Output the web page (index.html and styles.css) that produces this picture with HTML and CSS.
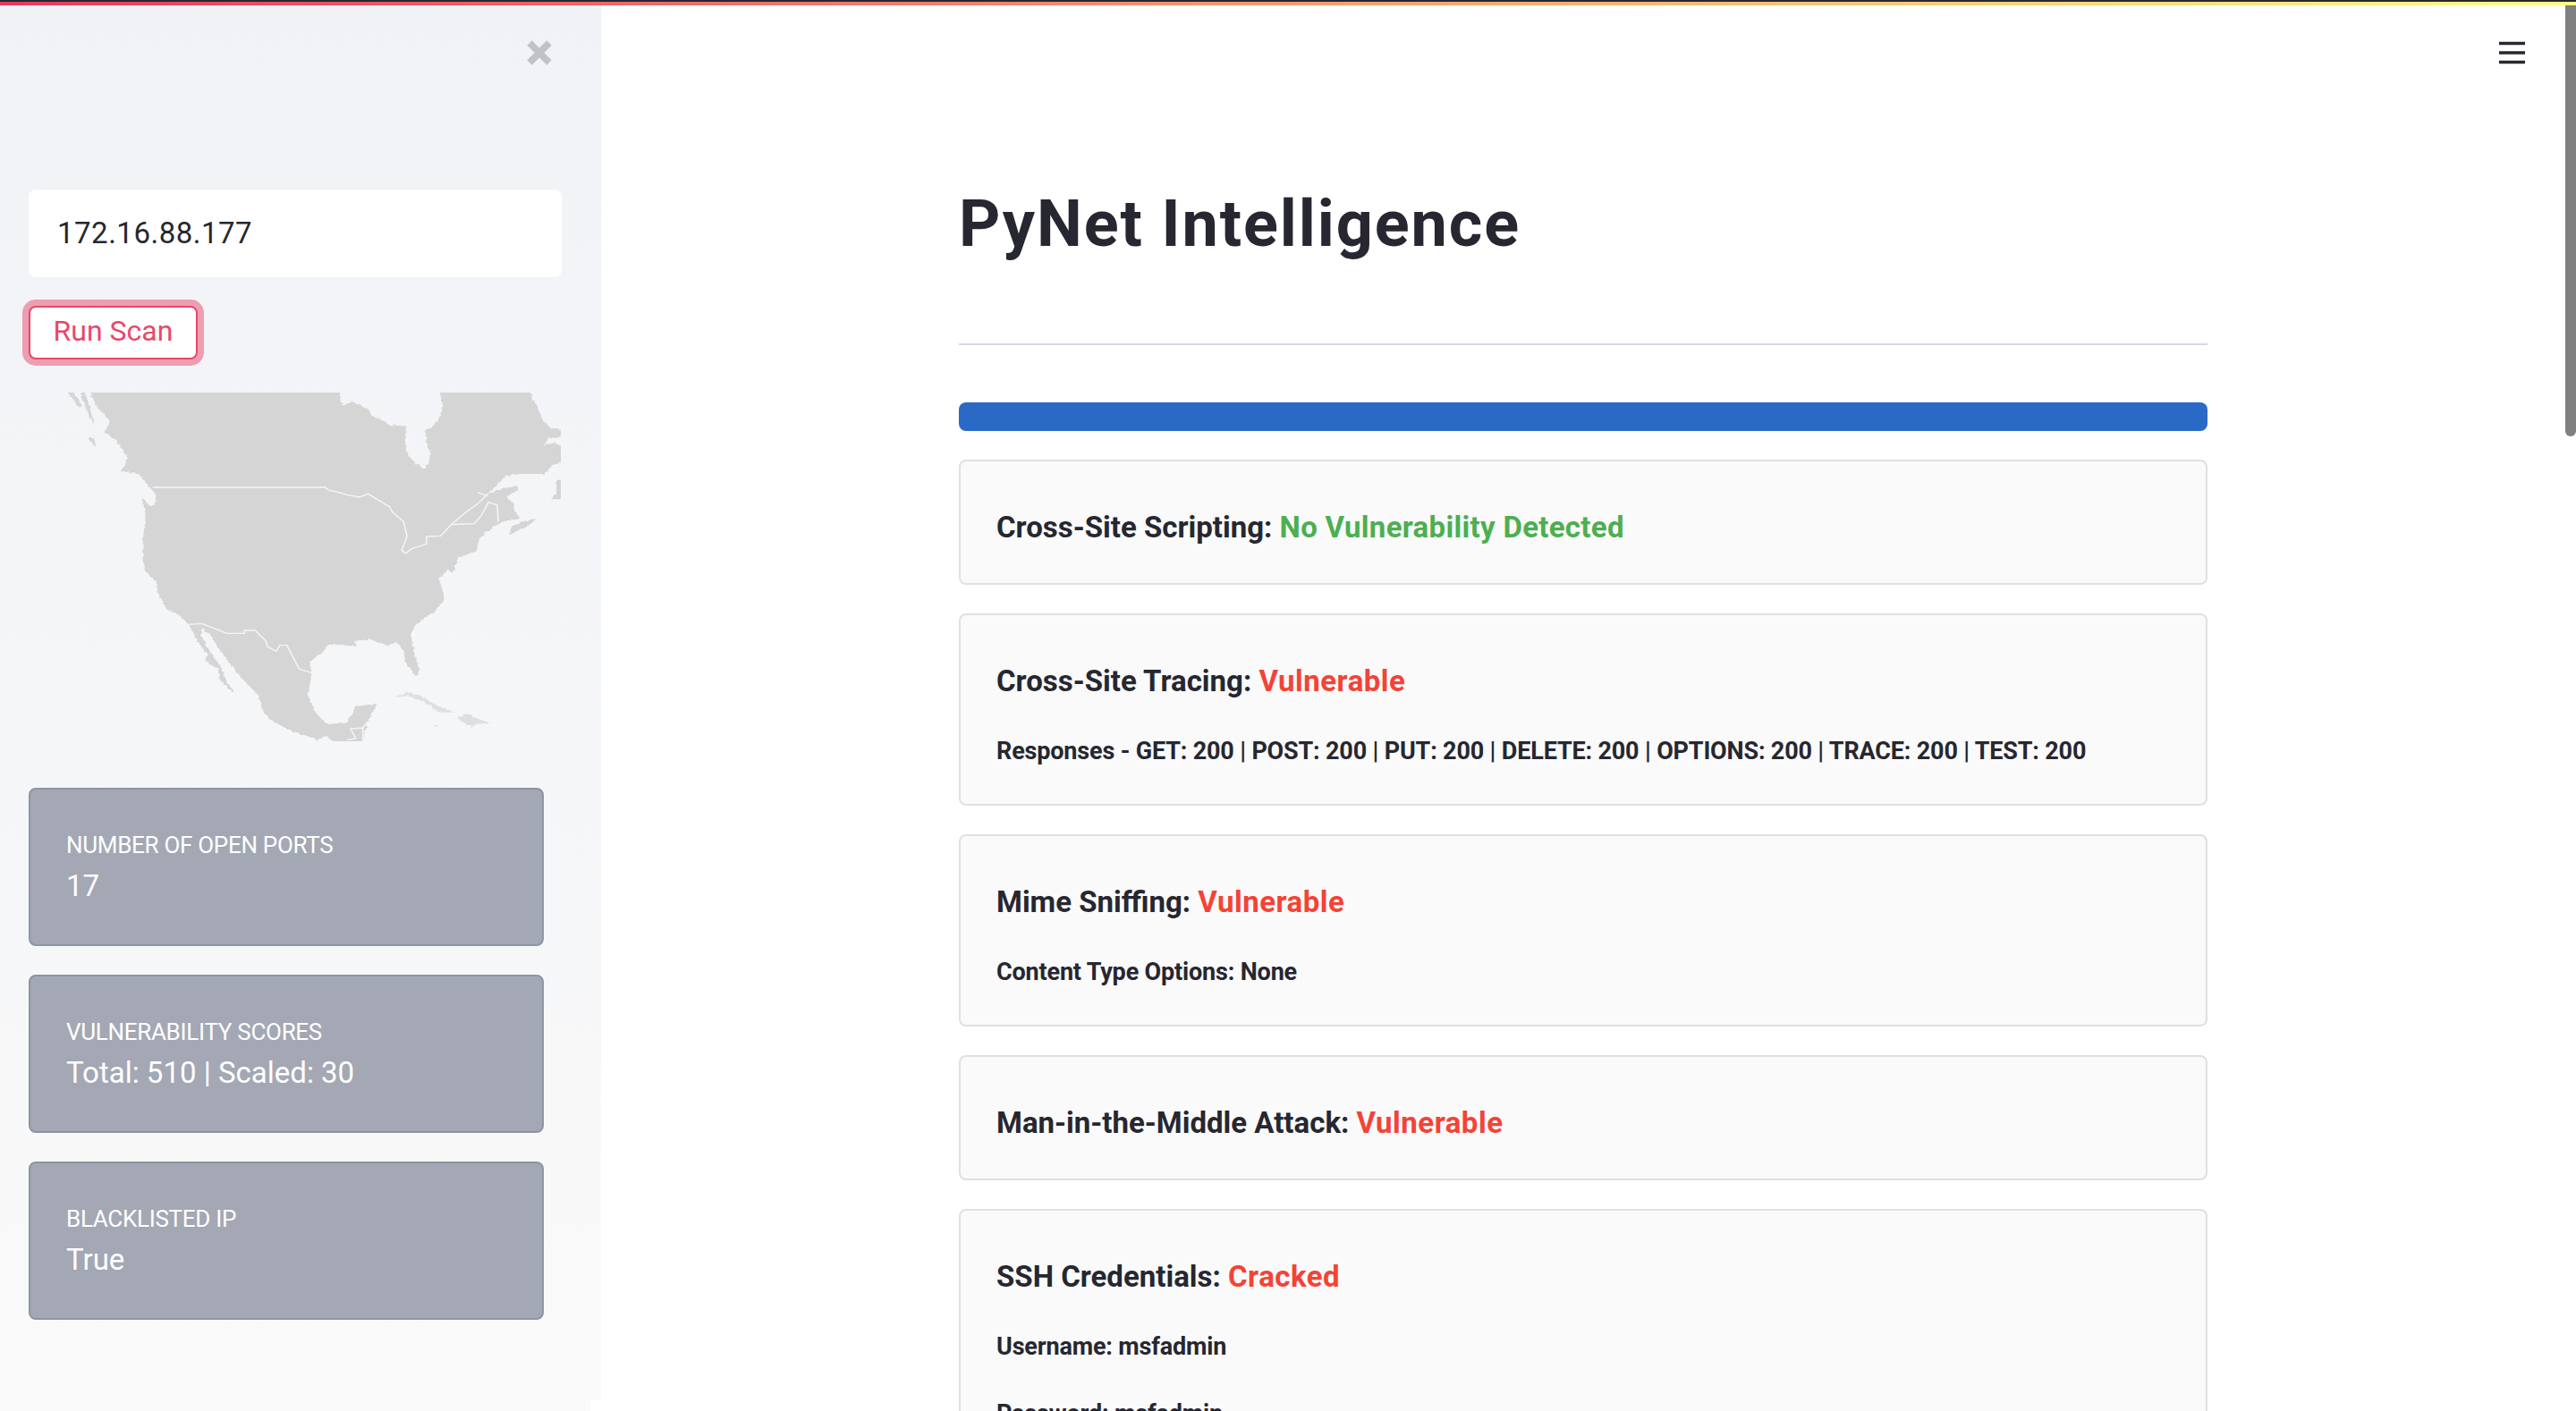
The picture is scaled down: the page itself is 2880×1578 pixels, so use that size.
FILE: index.html
```html
<!DOCTYPE html>
<html lang="en">
<head>
<meta charset="utf-8">
<title>PyNet Intelligence</title>
<link rel="stylesheet" href="styles.css">
</head>
<body>
<div class="topbar"></div>
<div class="app">
  <aside class="sidebar">
    <div class="close-row">
      <svg class="close-icon" viewBox="0 0 28 28" aria-hidden="true"><path d="M3 3L25 25M25 3L3 25"/></svg>
    </div>
    <div class="ip-input">172.16.88.177</div>
    <button class="run-btn" type="button">Run Scan</button>
    <svg class="map" viewBox="88 57 1397 1170" preserveAspectRatio="none" aria-hidden="true">
      <defs>
        <filter id="rough" x="-2%" y="-2%" width="104%" height="104%">
          <feTurbulence type="fractalNoise" baseFrequency="0.09" numOctaves="2" seed="4"/>
          <feDisplacementMap in="SourceGraphic" scale="11" xChannelSelector="R" yChannelSelector="G"/>
        </filter>
      </defs>
      <g filter="url(#rough)">
        <path class="land" d="M140 30L860 30L860 57L865 100L895 88L920 100L940 115L950 135L990 155L995 165L1045 170L1047 200L1045 235L1055 270L1075 295L1085 300L1100 315L1112 290L1115 265L1105 225L1100 185L1125 170L1145 135L1152 100L1143 57L1143 30L1400 30L1400 60L1415 100L1435 150L1455 175L1500 185L1500 198L1450 212L1435 235L1470 225L1500 250L1500 290L1460 300L1440 330L1375 330L1330 335L1310 360L1280 395L1320 378L1360 372L1365 385L1330 405L1350 430L1355 460L1370 480L1320 490L1280 520L1255 545L1245 590L1195 610L1180 660L1165 650L1140 680L1150 720L1155 750L1130 790L1075 835L1060 870L1075 950L1085 990L1075 1010L1045 960L1040 925L1020 895L995 905L945 885L900 890L905 910L875 905L845 900L820 910L810 930L775 960L780 1000L770 1070L790 1130L825 1170L880 1165L905 1110L965 1100L940 1160L925 1220L930 1240L850 1240L825 1210L795 1222L720 1190L670 1160L640 1125L630 1075L570 1000L520 920L490 865L470 850L468 870L490 920L520 970L545 1040L563 1060L555 1062L520 1020L515 985L480 960L485 935L460 900L430 830L395 795L370 785L345 730L340 690L310 660L303 625L302 560L310 470L300 405L320 435L335 435L340 400L315 365L290 330L240 320L260 275L225 215L195 190L210 150L175 110Z"/>
        <path class="land" d="M1340 535L1345 510L1375 490L1415 482L1385 510L1355 525Z"/>
        <path class="land" d="M1457 415L1470 395L1475 350L1500 348L1500 415Z"/>
        <path class="land faint" d="M1012 1080L1050 1062L1090 1075L1130 1105L1185 1130L1140 1130L1100 1095L1050 1075Z"/>
        <path class="land faint" d="M1190 1150L1215 1135L1270 1160L1290 1165L1240 1170L1235 1180L1210 1165Z"/>
        <path class="land faint" d="M1125 1172L1145 1175L1130 1178Z"/>
        <path class="land" d="M150 205L165 215L170 240L155 225Z"/>
        <path class="land" d="M90 57L105 57L130 100L125 110Z"/>
        <path class="land" d="M125 57L140 57L155 120L165 165L148 130Z"/>
        <path class="water" d="M1375 350L1405 368L1385 362Z"/>
      </g>
      <path class="border" d="M330 375L820 375L822 380L830 385L850 390L880 400L915 408L940 397L1000 440L1010 460L1040 490L1050 540L1035 585L1045 597L1065 580L1105 565L1105 540L1145 538L1175 500L1240 497L1260 470L1280 425L1305 435L1308 490"/>
      <path class="border" d="M1175 500L1215 460L1250 430L1280 395"/>
      <path class="border" d="M1250 392L1278 405"/>
      <path class="border" d="M430 835L470 832L540 865L590 865L590 855L620 855L650 890L655 910L680 925L690 905L710 905L745 985L780 997"/>
      <path class="border" d="M880 1222L905 1218L890 1185L925 1182L925 1222M925 1182L940 1160"/>
    </svg>
    <div class="stats">
      <div class="stat">
        <div class="stat-label">NUMBER OF OPEN PORTS</div>
        <div class="stat-value">17</div>
      </div>
      <div class="stat">
        <div class="stat-label">VULNERABILITY SCORES</div>
        <div class="stat-value">Total: 510 | Scaled: 30</div>
      </div>
      <div class="stat">
        <div class="stat-label">BLACKLISTED IP</div>
        <div class="stat-value">True</div>
      </div>
    </div>
  </aside>
  <main class="main">
    <div class="content">
      <h1 class="title">PyNet Intelligence</h1>
      <hr class="divider">
      <div class="progress"></div>
      <section class="card">
        <h4 class="card-title">Cross-Site Scripting: <span class="ok">No Vulnerability Detected</span></h4>
      </section>
      <section class="card">
        <h4 class="card-title">Cross-Site Tracing: <span class="bad">Vulnerable</span></h4>
        <p class="card-line">Responses - GET: 200 | POST: 200 | PUT: 200 | DELETE: 200 | OPTIONS: 200 | TRACE: 200 | TEST: 200</p>
      </section>
      <section class="card">
        <h4 class="card-title">Mime Sniffing: <span class="bad">Vulnerable</span></h4>
        <p class="card-line">Content Type Options: None</p>
      </section>
      <section class="card">
        <h4 class="card-title">Man-in-the-Middle Attack: <span class="bad">Vulnerable</span></h4>
      </section>
      <section class="card">
        <h4 class="card-title">SSH Credentials: <span class="bad">Cracked</span></h4>
        <p class="card-line">Username: msfadmin</p>
        <p class="card-line">Password: msfadmin</p>
      </section>
    </div>
  </main>
</div>
<svg class="menu-icon" viewBox="0 0 29 26" aria-hidden="true"><path d="M0 2.5H29M0 13H29M0 23.5H29"/></svg>
<div class="scrollbar"></div>
</body>
</html>
```

FILE: styles.css
```css
* { box-sizing: border-box; }
html, body { margin: 0; height: 100%; overflow: hidden; background: #fff; }
body { font-family: Roboto, "Noto Sans", sans-serif; color: #262730; }

.topbar {
  height: 6px;
  background: linear-gradient(90deg, #e8395f, #fffd80);
  border-top: 2px solid #262730;
}
.app { display: flex; height: 1572px; overflow: hidden; }

.sidebar {
  position: relative;
  flex: 0 0 672px;
  padding: 39px 32px 0;
  background: linear-gradient(180deg, #f0f2f6, #fafafa);
}
.sidebar::after {
  content: "";
  position: absolute;
  right: 0;
  bottom: 0;
  width: 12px;
  height: 12px;
  background: #fff;
}
.close-row { display: flex; justify-content: flex-end; height: 28px; padding-right: 23px; }
.close-icon { width: 28px; height: 28px; fill: none; stroke: #c0c2c7; stroke-width: 7.5; }

.ip-input {
  display: flex;
  align-items: center;
  width: 596px;
  height: 98px;
  margin-top: 139px;
  padding: 0 0 2px 32px;
  background: #fff;
  border-radius: 8px;
  font-size: 33px;
  letter-spacing: 0.5px;
}
.run-btn {
  display: block;
  width: 189px;
  height: 60px;
  margin-top: 32px;
  padding: 0 0 4px;
  background: #fff;
  border: 2px solid #e8476a;
  border-radius: 8px;
  box-shadow: 0 0 0 7px rgba(232, 71, 106, 0.5);
  color: #e8476a;
  font: 400 32px Roboto, sans-serif;
}
.map { display: block; width: 552px; height: 390px; margin: 37px 0 0 43px; }
.land { fill: #d5d5d5; }
.faint { opacity: 0.7; }
.water { fill: #f4f5f8; }
.border { fill: none; stroke: #f4f5f8; stroke-width: 4; }

.stats { display: flex; flex-direction: column; gap: 32px; width: 576px; margin-top: 52px; }
.stat {
  height: 177px;
  padding: 44px 40px 0;
  background: #a3a8b4;
  border: 2px solid #8f94a3;
  border-radius: 8px;
  color: #fff;
}
.stat-label { font-size: 26px; line-height: 36px; letter-spacing: -0.3px; }
.stat-value { margin-top: 6px; font-size: 33px; line-height: 44px; }

.main { flex: 1; min-width: 0; padding-right: 12px; }
.content { width: 1396px; margin: 0 auto; padding-top: 195px; }
.title { margin: 0; font-size: 72px; line-height: 100px; font-weight: 700; letter-spacing: 1.9px; }
.divider { height: 2px; margin: 83px 0 64px; border: 0; background: #d5d9e6; }
.progress { height: 32px; background: #2a69c5; border-radius: 8px; }

.card {
  margin-top: 32px;
  padding: 51px 40px 39px;
  background: #fafafa;
  border: 2px solid #e0e0e0;
  border-radius: 8px;
}
.card-title { margin: 0; font-size: 33px; line-height: 46px; font-weight: 700; }
.card-line { margin: 35px 0 0; font-size: 27px; line-height: 40px; font-weight: 700; letter-spacing: -0.17px; }
.ok { color: #4caf50; letter-spacing: 0.3px; }
.bad { color: #f44336; letter-spacing: 0.5px; }

.menu-icon {
  position: absolute;
  top: 46px;
  left: 2794px;
  width: 29px;
  height: 26px;
  fill: none;
  stroke: #262730;
  stroke-width: 3.5;
}
.scrollbar {
  position: absolute;
  top: 6px;
  right: 0;
  width: 12px;
  height: 482px;
  background: #808080;
  border-radius: 0 0 6px 6px;
}
```
